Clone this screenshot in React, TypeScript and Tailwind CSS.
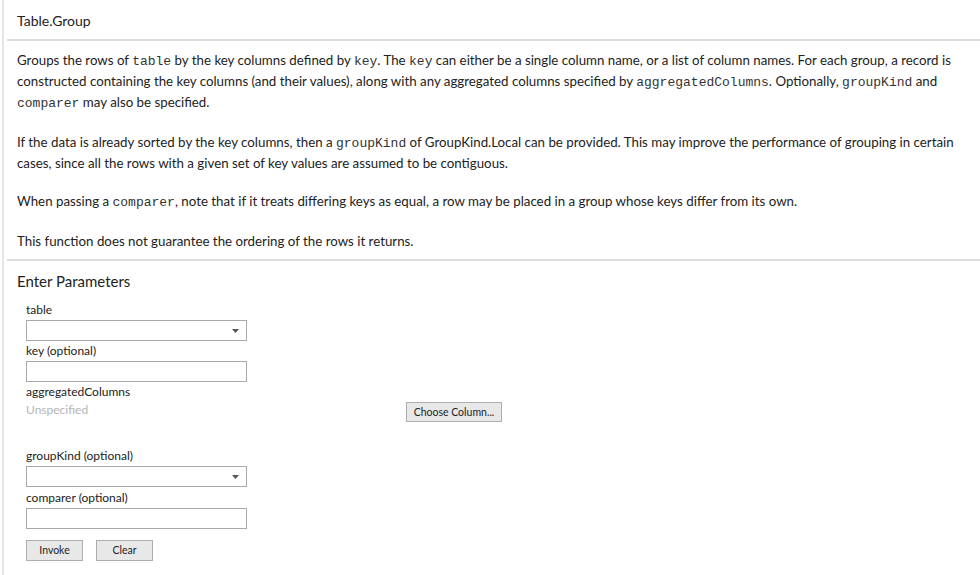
import React from 'react'

const code = 'font-["Liberation_Mono",monospace] text-[13px] leading-[1] text-[#333]'

const Caret = () => (
  <svg className="w-[7px] h-[4px]" viewBox="0 0 7 4">
    <path d="M0 0h7L3.5 4z" fill="#555" />
  </svg>
)

const SelectBox = () => (
  <div className="w-[221px] h-[21px] border border-[#a9a9a9] bg-white flex items-center justify-end pr-[7px]">
    <Caret />
  </div>
)

const TextBox = () => <div className="w-[221px] h-[21px] border border-[#a9a9a9] bg-white" />

const Label = ({ children }: { children: React.ReactNode }) => (
  <div className="text-[12px] leading-[14px] text-[#222] mb-[3px]">{children}</div>
)

const Btn = ({ children, className = '' }: { children: React.ReactNode; className?: string }) => (
  <button className={`block border border-[#adadad] bg-[#e8e8e8] text-[10.5px] leading-[1] text-[#222] ${className}`}>
    {children}
  </button>
)

export default function App() {
  return (
    <div className="w-[980px] h-[575px] bg-white overflow-hidden font-['Lato',sans-serif] text-[#222]">
      <div className="ml-[2px] border-l-2 border-[#e6e6e6] h-full pl-[3px]">
        {/* Title */}
        <div className="h-[39px] pl-[10px] pt-[11px] text-[14px] leading-[20px]">Table.Group</div>
        <div className="border-t-2 border-[#dcdcdc]" />

        {/* Description */}
        <div className="pl-[10px] pr-[4px] pt-[9px] text-[13.3px] leading-[21px]">
          <p>
            Groups the rows of <span className={code}>table</span> by the key columns defined by{' '}
            <span className={code}>key</span>. The <span className={code}>key</span> can either be a single column
            name, or a list of column names. For each group, a record is constructed containing the key columns (and
            their values), along with any aggregated columns specified by{' '}
            <span className={code}>aggregatedColumns</span>. Optionally, <span className={code}>groupKind</span> and{' '}
            <span className={code}>comparer</span> may also be specified.
          </p>
          <p className="mt-[19px]">
            If the data is already sorted by the key columns, then a <span className={code}>groupKind</span> of
            GroupKind.Local can be provided. This may improve the performance of grouping in certain cases, since all
            the rows with a given set of key values are assumed to be contiguous.
          </p>
          <p className="mt-[17px]">
            When passing a <span className={code}>comparer</span>, note that if it treats differing keys as equal, a
            row may be placed in a group whose keys differ from its own.
          </p>
          <p className="mt-[19px]">This function does not guarantee the ordering of the rows it returns.</p>
        </div>
        <div className="mt-[7px] border-t-2 border-[#dcdcdc]" />

        {/* Parameters */}
        <div className="pl-[10px] pt-[10px]">
          <div className="text-[15px] leading-[20px]">Enter Parameters</div>
          <div className="pl-[9px] pt-[12px]">
            <Label>table</Label>
            <SelectBox />
            <div className="mt-[3px]">
              <Label>key (optional)</Label>
              <TextBox />
            </div>
            <div className="mt-[3px] flex items-start">
              <div className="w-[380px]">
                <Label>aggregatedColumns</Label>
                <div className="text-[12px] leading-[16px] text-[#b4b4b4]">Unspecified</div>
              </div>
              <div className="pt-[17px]">
                <Btn className="w-[96px] h-[20px]">Choose Column...</Btn>
              </div>
            </div>
            <div className="mt-[27px]">
              <Label>groupKind (optional)</Label>
              <SelectBox />
            </div>
            <div className="mt-[4px]">
              <Label>comparer (optional)</Label>
              <TextBox />
            </div>
            <div className="mt-[11px] flex gap-[13px]">
              <Btn className="w-[57px] h-[21px]">Invoke</Btn>
              <Btn className="w-[57px] h-[21px]">Clear</Btn>
            </div>
          </div>
        </div>
      </div>
    </div>
  )
}
